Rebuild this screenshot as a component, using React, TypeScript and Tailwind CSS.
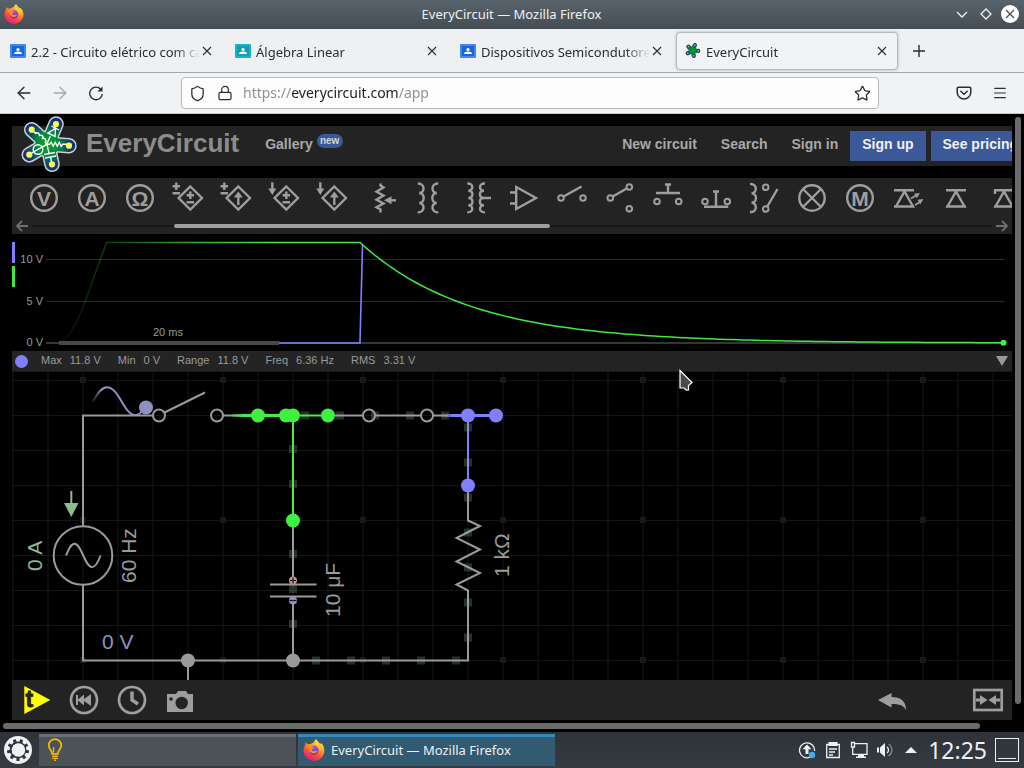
import { ReactNode } from "react";
import { ArrowLeft, ArrowRight, Lock, Menu, Shield, Star } from "lucide-react";

const UI = "font-['Noto_Sans',sans-serif]";
const GREY = "#9e9e9e";

/* ---------- shared drawings ---------- */

function FirefoxLogo({ className }: { className: string }) {
  return (
    <svg viewBox="0 0 24 24" className={className} aria-hidden="true">
      <defs>
        <linearGradient id="ffBody" x1="0.8" y1="0" x2="0.25" y2="1">
          <stop offset="0" stopColor="#fff44f" />
          <stop offset="0.35" stopColor="#ffa726" />
          <stop offset="0.65" stopColor="#ff4f3a" />
          <stop offset="1" stopColor="#e31587" />
        </linearGradient>
        <radialGradient id="ffGlobe" cx="0.6" cy="0.2" r="0.9">
          <stop offset="0" stopColor="#a14bf0" />
          <stop offset="1" stopColor="#4a3bc0" />
        </radialGradient>
      </defs>
      <path
        d="M14.5 0c1 2.200 3.300 3.900 4.600 5.500.5-.2.500-.8.300-1.400 2.600 2 4 5.500 3.900 8.600C23.100 19.100 18.200 23.700 12 23.700S.6 18.900.6 12.700c0-2.200.6-4.600 2-6.400l.3-2.800 2.300 2.100c1-.4 2.200-.3 3.200-.1C9.300 4.500 10.500 4 11.600 4c.4-1.500 1.500-3 2.900-4z"
        fill="url(#ffBody)"
      />
      <circle cx="12" cy="12.400" r="5" fill="url(#ffGlobe)" />
      <path d="M5.200 6.700c2.200-.6 4.200.2 5.300 1.800l2 .2c-.2 1.300-1.800 1.500-2.500 2.400-.4.800.1 1.800 1.100 2.200 1.800.7 3-.9 4.700-.3-.9 2.500-4.300 3.400-6.700 2-2.900-1.700-4.300-5.300-3.900-8.300z" fill="#ff8a1e" />
      <path d="M13 4c3.800 1.300 6.300 4.500 6.200 8.600-.3-1.700-1.200-3-2.600-3.700C17.300 7 14.500 6.300 13 4z" fill="#ffe14d" />
    </svg>
  );
}

function ClassroomIcon({ outer, inner }: { outer: string; inner: string }) {
  return (
    <svg viewBox="0 0 16 14" className="h-3.5 w-4 shrink-0" aria-hidden="true">
      <rect width="16" height="14" rx="1" fill={outer} />
      <rect x="2" y="2" width="12" height="10" fill={inner} />
      <circle cx="8" cy="5.500" r="1.600" fill="#fff" />
      <path d="M4 10c0-1.700 2-2.400 4-2.400s4 .7 4 2.400z" fill="#fff" />
    </svg>
  );
}

const ARMS: [number, number][] = [
  [11.7, 15.7],
  [36, 10],
  [49, 31.7],
  [32, 50.3],
  [9.3, 40.7],
];

function CircuitLogo({ className, detailed = true }: { className: string; detailed?: boolean }) {
  const id = detailed ? "logoLarge" : "logoSmall";
  const star = (grow: number, color: string) => (
    <g stroke={color} strokeLinecap="round" fill={color}>
      <circle cx="27.500" cy="30" r={12 + grow} stroke="none" />
      {ARMS.map(([x, y]) => (
        <path key={x} d={`M27.500 30L${x} ${y}`} strokeWidth={12.500 + grow * 2} />
      ))}
    </g>
  );
  return (
    <svg viewBox="0 2 58 60" className={className} fill="none" aria-hidden="true">
      <defs>
        <radialGradient id={id} gradientUnits="userSpaceOnUse" cx="28" cy="30" r="28">
          <stop offset="0" stopColor="#00a81c" />
          <stop offset="0.4" stopColor="#068a40" />
          <stop offset="0.72" stopColor="#0f4570" />
          <stop offset="1" stopColor="#122a80" />
        </radialGradient>
      </defs>
      {star(1.5, detailed ? "#d0d0d0" : "#34506e")}
      {star(0, `url(#${id})`)}
      {detailed && (
        <g stroke="#fff" strokeWidth="1.400">
          <path d="M26.700 30.300h3l1.500-2 2 4 2-4 2 4 2-4 2 4 1.500-2H48" />
          <path d="M26.700 30.300l-1.500-2.300c2-2-1-5-3-3 2-3-1-5-3-3 1-3-2-4-3.500-2.500L12 16" />
          <path d="M26.700 30.300l3.600-8M34 15l2-5M28 19l7 3.500.5-8zM31.500 12l7.500 4" />
          <circle cx="18" cy="35.500" r="4.800" />
          <path d="M26.700 30.300L10 40" />
          <path d="M27 30.300l2 9M24 40.500l11-2M25 44l11-2M30.500 43l1.500 7" />
        </g>
      )}
      {ARMS.map(([x, y]) => (
        <circle key={x} cx={x} cy={y} r="3.100" fill={detailed ? "#fdfd50" : "#8ae060"} />
      ))}
    </svg>
  );
}

/* ---------- browser chrome ---------- */

function TitleBar() {
  return (
    <header className={`flex h-[29px] items-center bg-linear-to-b from-[#59636b] to-[#454d54] pr-[5px] pb-px pl-1 text-[#eff0f1] ${UI}`}>
      <div className="flex flex-1">
        <FirefoxLogo className="size-5" />
      </div>
      <h1 className="text-[13px] leading-5">EveryCircuit — Mozilla Firefox</h1>
      <div className="flex flex-1 items-center justify-end gap-1.5">
        <button aria-label="Minimize" className="size-[18px]">
          <svg viewBox="0 0 18 18" fill="none" stroke="currentColor" strokeWidth="1.300">
            <path d="M4 7l5 5 5-5" />
          </svg>
        </button>
        <button aria-label="Maximize" className="size-[18px]">
          <svg viewBox="0 0 18 18" fill="none" stroke="currentColor" strokeWidth="1.300">
            <path d="M9 4l5 5-5 5-5-5z" />
          </svg>
        </button>
        <button aria-label="Close" className="size-[18px] rounded-full bg-white text-[#4a525a]">
          <svg viewBox="0 0 18 18" fill="none" stroke="currentColor" strokeWidth="1.400">
            <path d="M5 5l8 8M13 5l-8 8" />
          </svg>
        </button>
      </div>
    </header>
  );
}

const TABS: { title: string; icon: ReactNode; active?: boolean }[] = [
  { title: "2.2 - Circuito elétrico com capacitor", icon: <ClassroomIcon outer="#4285f4" inner="#1967d2" /> },
  { title: "Álgebra Linear", icon: <ClassroomIcon outer="#12b5cb" inner="#129eaf" /> },
  { title: "Dispositivos Semicondutores", icon: <ClassroomIcon outer="#4285f4" inner="#1967d2" /> },
  { title: "EveryCircuit", icon: <CircuitLogo className="size-4 shrink-0" detailed={false} />, active: true },
];

function TabStrip() {
  return (
    <div className={`flex h-11 items-center gap-[3px] border-b border-[#a5a6a9] bg-[#eff0f2] pl-px text-[#2a2c30] ${UI}`}>
      {TABS.map((tab) => (
        <div
          key={tab.title}
          className={`flex h-[38px] w-[222px] items-center rounded border px-2 ${
            tab.active ? "border-[#b5b8c2] bg-[#f2f3f5] shadow-[0_0_3px_#b0b2bb]" : "border-transparent"
          }`}
        >
          {tab.icon}
          <span className="ml-[5px] flex-1 overflow-hidden pt-0.5 text-[13px] leading-5 whitespace-nowrap mask-[linear-gradient(to_right,#000_calc(100%-26px),transparent)]">
            {tab.title}
          </span>
          <button aria-label={`Close ${tab.title}`} className="size-3.5">
            <svg viewBox="0 0 14 14" fill="none" stroke="currentColor" strokeWidth="1.100">
              <path d="M3 3l8 8M11 3l-8 8" />
            </svg>
          </button>
        </div>
      ))}
      <button aria-label="New tab" className="ml-2.5 size-4">
        <svg viewBox="0 0 16 16" fill="none" stroke="currentColor" strokeWidth="1.400">
          <path d="M8 2v12M2 8h12" />
        </svg>
      </button>
    </div>
  );
}

function NavBar() {
  return (
    <nav className={`flex h-[41px] items-center border-b border-[#c8c9cc] bg-[#f1f2f4] px-4 text-[#2a2c30] ${UI}`}>
      <button aria-label="Back" className="flex size-4 items-center justify-center">
        <ArrowLeft size={20} strokeWidth={1.6} className="shrink-0" />
      </button>
      <button aria-label="Forward" className="ml-5 flex size-4 items-center justify-center text-[#a7a8ab]">
        <ArrowRight size={20} strokeWidth={1.6} className="shrink-0" />
      </button>
      <button aria-label="Reload" className="ml-5 size-4">
        <svg viewBox="0 0 16 16" fill="none" stroke="currentColor" strokeWidth="1.400">
          <path d="M12.800 4.300A6.300 6.300 0 1 0 14.300 9" />
          <path d="M14.500 1.500v5H9.500z" fill="currentColor" stroke="none" />
        </svg>
      </button>
      <div className="ml-[77px] flex h-8 flex-1 items-center rounded border border-[#b7b9be] bg-[#fdfdfe] px-[7px]">
        <Shield size={17} strokeWidth={1.8} className="shrink-0" />
        <Lock size={16} strokeWidth={1.8} className="ml-[11px] shrink-0" />
        <input
          type="text"
          aria-label="Address"
          defaultValue="https://everycircuit.com/app"
          className="ml-2.5 min-w-0 flex-1 bg-[linear-gradient(to_right,#8c8d90_48px,#1c1d20_48px,#1c1d20_156px,#8c8d90_156px)] bg-clip-text text-[14px] leading-6 text-transparent outline-none"
        />
        <button aria-label="Bookmark" className="size-[17px]">
          <Star size={17} strokeWidth={1.8} />
        </button>
      </div>
      <button aria-label="Save to Pocket" className="ml-[77px] size-4">
        <svg viewBox="0 0 16 16" fill="none" stroke="currentColor" strokeWidth="1.500" strokeLinecap="round" strokeLinejoin="round">
          <path d="M2.500 2.200h11a1.300 1.300 0 0 1 1.300 1.300v3.700a6.800 6.800 0 0 1-13.600 0V3.500a1.300 1.300 0 0 1 1.300-1.300z" />
          <path d="M4.800 6.300L8 9.300l3.200-3" />
        </svg>
      </button>
      <button aria-label="Menu" className="ml-5 size-4">
        <Menu size={16} strokeWidth={1.8} />
      </button>
    </nav>
  );
}

/* ---------- site header ---------- */

function SiteHeader() {
  const link = "flex h-[30px] shrink-0 items-center px-3 pb-1";
  return (
    <div className="flex h-10 items-center bg-[#232323] pl-2 text-[14px] font-bold text-[#a9a9a9]">
      <CircuitLogo className="h-[60px] w-[58px] shrink-0" />
      <a href="#home" className="ml-2 shrink-0 pb-1.5 text-[26px] leading-8 text-[#8c8c8c]">
        EveryCircuit
      </a>
      <a href="#gallery" className="ml-[26px] shrink-0 pb-1">
        Gallery
      </a>
      <span className="ml-1 flex h-3.5 w-[26px] shrink-0 -translate-y-[5px] items-center justify-center rounded-full bg-[#3b5998] pb-0.5 text-[10px] text-[#d4d4d4]">
        new
      </span>
      <div className="-mr-[18px] ml-auto flex shrink-0">
        <a href="#new" className={link}>New circuit</a>
        <a href="#search" className={link}>Search</a>
        <a href="#signin" className={link}>Sign in</a>
        <a href="#signup" className={`${link} bg-[#3b5998] text-[#f0f0f0]`}>Sign up</a>
        <a href="#pricing" className={`${link} ml-[5px] bg-[#3b5998] text-[#f0f0f0]`}>See pricing</a>
      </div>
    </div>
  );
}

/* ---------- component palette ---------- */

const Meter = ({ letter }: { letter: string }) => (
  <>
    <circle cx="24" cy="20" r="12.800" />
    <text x="24" y="27.500" textAnchor="middle" fontSize="21" fontWeight="bold" fill={GREY} stroke="none">
      {letter}
    </text>
  </>
);

const Diamond = () => <path d="M26.300 8.500L38 20 26.300 31.500 14.600 20z" />;
const PlusMinus = ({ x, y }: { x: number; y: number }) => (
  <path d={`M${x - 3.7} ${y}h7.400M${x} ${y - 3.7}v7.400M${x - 3.7} ${y + 7}h7.400`} />
);
const ArrowDown = () => (
  <>
    <path d="M12.300 4.300v8" />
    <path d="M8.300 10.500h8l-4 6.500z" fill={GREY} stroke="none" />
  </>
);
const InnerUp = () => (
  <>
    <path d="M26.300 27v-8" />
    <path d="M21.800 19.500h9l-4.500-6z" fill={GREY} stroke="none" />
  </>
);

const PALETTE: { name: string; art: ReactNode }[] = [
  { name: "Voltmeter", art: <Meter letter="V" /> },
  { name: "Ammeter", art: <Meter letter="A" /> },
  { name: "Ohmmeter", art: <Meter letter="Ω" /> },
  { name: "Voltage-controlled voltage source", art: <><PlusMinus x={12.3} y={8.3} /><Diamond /><PlusMinus x={26.3} y={17.3} /></> },
  { name: "Voltage-controlled current source", art: <><PlusMinus x={12.3} y={8.3} /><Diamond /><InnerUp /></> },
  { name: "Current-controlled voltage source", art: <><ArrowDown /><Diamond /><PlusMinus x={26.3} y={17.3} /></> },
  { name: "Current-controlled current source", art: <><ArrowDown /><Diamond /><InnerUp /></> },
  {
    name: "Potentiometer",
    art: (
      <>
        <path d="M24.500 5.500v2l3 2-7 4.200 7 3.800-7 4.200 7 3.800-7 3.800 4 2.200v3" />
        <path d="M40 22.300h-6" />
        <path d="M28 22.300l7.500-4v8z" fill={GREY} stroke="none" />
      </>
    ),
  },
  {
    name: "Transformer",
    art: (
      <>
        <path d="M13.700 5.500c7.500-.5 7.500 9.500 1.500 9.500 6 0 6 10 0 10 6 0 6 10-1.500 9.300" />
        <path d="M34.300 5.500c-7.500-.5-7.500 9.500-1.500 9.500-6 0-6 10 0 10-6 0-6 10 1.500 9.300" />
      </>
    ),
  },
  {
    name: "Tapped transformer",
    art: (
      <>
        <path d="M15.300 5.500c6.500-.5 6.500 7.200 1 7.200 5.500 0 5.500 7.300 0 7.300 5.500 0 5.500 7.300 0 7.300 5.500 0 5.500 7.500-1 7" />
        <path d="M33 5.500c-6.500-.5-6.500 7.200-1 7.200-5.500 0-5.500 7.300 0 7.300-5.500 0-5.500 7.300 0 7.300-5.500 0-5.500 7.500 1 7M31 20h8" />
      </>
    ),
  },
  { name: "Op-amp", art: <path d="M16.200 9v22L36 20zM10 14.500h6M10 25.500h6" /> },
  {
    name: "Switch",
    art: (
      <>
        <circle cx="13" cy="20" r="2.800" strokeWidth="2" />
        <circle cx="35" cy="20" r="2.800" strokeWidth="2" />
        <path d="M15.500 18.500l18-10" />
      </>
    ),
  },
  {
    name: "Two-way switch",
    art: (
      <>
        <circle cx="14.300" cy="20" r="2.800" strokeWidth="2" />
        <circle cx="33.300" cy="9" r="2.800" strokeWidth="2" />
        <circle cx="33.300" cy="30.700" r="2.800" strokeWidth="2" />
        <path d="M16.700 18.500l14-8" />
      </>
    ),
  },
  {
    name: "Push button, open",
    art: (
      <>
        <circle cx="13" cy="23.500" r="2.800" strokeWidth="2" />
        <circle cx="34.700" cy="23.500" r="2.800" strokeWidth="2" />
        <path d="M12 15h24M24 6v9M21 6.500h6" />
      </>
    ),
  },
  {
    name: "Push button, closed",
    art: (
      <>
        <circle cx="13" cy="23.500" r="2.800" strokeWidth="2" />
        <circle cx="35.300" cy="23.500" r="2.800" strokeWidth="2" />
        <path d="M12 28.700h24.300M24 13v15M21 13.500h6" />
      </>
    ),
  },
  {
    name: "Relay",
    art: (
      <>
        <path d="M10 6c7.500-.5 7.500 9.300 1.500 9.300 6 0 6 9.400 0 9.400 6 0 6 9.800-1.500 9.300" />
        <circle cx="25.700" cy="9.300" r="2.800" strokeWidth="2" />
        <circle cx="25.700" cy="31" r="2.800" strokeWidth="2" />
        <path d="M27.300 28.500L37.500 11" />
      </>
    ),
  },
  {
    name: "Lamp",
    art: (
      <>
        <circle cx="24" cy="20" r="12.700" />
        <path d="M15 11l18 18M33 11L15 29" />
      </>
    ),
  },
  { name: "Motor", art: <Meter letter="M" /> },
  {
    name: "LED",
    art: (
      <>
        <path d="M10 12.300h20M12 28.500h17l-8.500-15zM10 28.500h20" />
        <path d="M27 20.500l5-3M31 27l5-3" strokeWidth="1.800" />
        <path d="M36 15l-6 .8 2.800 4.500zM39.500 21l-6 .8 2.800 4.500z" fill={GREY} stroke="none" />
      </>
    ),
  },
  { name: "Diode", art: <path d="M14 12.300h20M15.500 28.500h17L24 13.500zM14 28.500h20" /> },
  { name: "Zener diode", art: <path d="M15 16v-3.700h18V9M15.500 28.500h17L24 13.500zM14 28.500h20" /> },
];

function Palette() {
  return (
    <section aria-label="Components" className="mt-3 overflow-hidden bg-[#232323]">
      <div className="flex h-10 pl-2">
        {PALETTE.map((item) => (
          <button key={item.name} aria-label={item.name} className="h-10 w-12 shrink-0">
            <svg viewBox="0 0 48 40" className="h-10 w-12" fill="none" stroke={GREY} strokeWidth="2.400">
              {item.art}
            </svg>
          </button>
        ))}
      </div>
      <div className="flex h-4 items-center gap-1 px-1 text-[#6e6e6e]">
        <svg viewBox="0 0 12 12" className="size-3 shrink-0" fill="none" stroke="currentColor" strokeWidth="1.800">
          <path d="M12 6H1M6 1L1 6l5 5" />
        </svg>
        <div className="flex h-0.5 flex-1 items-center bg-[#191919]">
          <div className="ml-[14.8%] h-1 w-[39.2%] rounded-full bg-[#9e9e9e]" />
        </div>
        <svg viewBox="0 0 12 12" className="size-3 shrink-0" fill="none" stroke="currentColor" strokeWidth="1.800">
          <path d="M0 6h11M6 1l5 5-5 5" />
        </svg>
      </div>
    </section>
  );
}

/* ---------- oscilloscope ---------- */

const DECAY_START = 360;
const DECAY_CONSTANT = 110;
const decayPath = Array.from({ length: 108 }, (_, i) => {
  const x = DECAY_START + i * 6;
  const y = 343 - 100.5 * Math.exp(-(x - DECAY_START) / DECAY_CONSTANT);
  return `L${Math.min(x, 1003)} ${y.toFixed(2)}`;
}).join("");

function Scope() {
  return (
    <svg className="block h-[117px] w-full" fill="none" role="img" aria-label="Voltage over time">
      <defs>
        <linearGradient id="traceFade" gradientUnits="userSpaceOnUse" x1="59" y1="0" x2="270" y2="0">
          <stop offset="0" stopColor="#40e840" stopOpacity="0.030" />
          <stop offset="0.22" stopColor="#40e840" stopOpacity="0.250" />
          <stop offset="0.6" stopColor="#40e840" stopOpacity="0.700" />
          <stop offset="1" stopColor="#40e840" />
        </linearGradient>
      </defs>
      <g transform="translate(-12 -234)">
        <rect x="12" y="242" width="3" height="21" fill="#8080ff" />
        <rect x="12" y="266" width="3" height="21" fill="#40e840" />
        <g fill="#9a9a9a" fontSize="11" textAnchor="end">
          <text x="43" y="263">10 V</text>
          <text x="43" y="305">5 V</text>
          <text x="43" y="346">0 V</text>
        </g>
        <path d="M46 259.500H1004M46 301.500H1004" stroke="#2b2b2b" />
        <path d="M46 343H1004" stroke="#484848" strokeWidth="1.500" />
        <path d="M59 343H279" stroke="#484848" strokeWidth="4" />
        <path d="M279 343H360L362.500 245" stroke="#8080ff" strokeWidth="1.600" />
        <path d="M59 343C72 338 84 306 90 288L106.500 242.500H268" stroke="url(#traceFade)" strokeWidth="1.500" />
        <path d={`M268 242.500H360${decayPath}`} stroke="#40e840" strokeWidth="1.500" />
        <circle cx="1003.500" cy="342.700" r="3" fill="#40f040" />
        <text x="153" y="336" fontSize="11" fill="#9a9a9a">
          20 ms
        </text>
      </g>
    </svg>
  );
}

const STATS = [
  ["Max", "11.8 V"],
  ["Min", "0 V"],
  ["Range", "11.8 V"],
  ["Freq", "6.36 Hz"],
  ["RMS", "3.31 V"],
];

function StatsBar() {
  return (
    <div className="flex h-5 items-center bg-[#242424] pr-1 pl-[3px] text-[11px] leading-4 text-[#9a9a9a]">
      <span className="mr-[13px] size-[13px] rounded-full bg-[#8080ff]" />
      <dl className="flex gap-[17px] pb-0.5">
        {STATS.map(([label, value]) => (
          <div key={label} className="flex gap-2">
            <dt>{label}</dt>
            <dd>{value}</dd>
          </div>
        ))}
      </dl>
      <button aria-label="Collapse" className="ml-auto">
        <svg viewBox="0 0 12 10" className="h-2.5 w-3">
          <path d="M0 0h12L6 10z" fill="#9a9a9a" />
        </svg>
      </button>
    </div>
  );
}

/* ---------- schematic ---------- */

const CHARGES: [number, number][] = [
  [305, 415.5], [340, 415.5], [375, 415.5], [410, 415.5], [445, 415.5],
  [293, 449], [293, 484], [293, 554], [293, 589], [293, 624],
  [468, 427.5], [468, 462.5], [468, 497.5], [468, 532.5], [468, 567.5], [468, 602.5], [468, 637.5],
  [316, 660.5], [351, 660.5], [386, 660.5], [421, 660.5], [456, 660.5],
];

function Schematic() {
  return (
    <div className="relative border-t border-[#1a1a1a]">
      <svg className="block h-[308px] w-full" fill="none" role="img" aria-label="Circuit diagram">
        <defs>
          <pattern id="grid" patternUnits="userSpaceOnUse" x="82" y="380" width="35" height="35">
            <rect width="2" height="35" fill="#0c0c0c" />
            <rect width="35" height="1" fill="#151515" />
          </pattern>
          <pattern id="gridDots" patternUnits="userSpaceOnUse" x="80" y="377" width="140" height="140">
            <rect width="6" height="6" fill="#191919" />
          </pattern>
          <linearGradient id="toGreen" gradientUnits="userSpaceOnUse" x1="230" y1="0" x2="242" y2="0">
            <stop offset="0" stopColor="#40f040" stopOpacity="0" />
            <stop offset="1" stopColor="#40f040" />
          </linearGradient>
          <linearGradient id="toBlue" gradientUnits="userSpaceOnUse" x1="440" y1="0" x2="452" y2="0">
            <stop offset="0" stopColor="#8080ff" stopOpacity="0" />
            <stop offset="1" stopColor="#8080ff" />
          </linearGradient>
          <linearGradient id="waveFade" gradientUnits="userSpaceOnUse" x1="92" y1="0" x2="102" y2="0">
            <stop offset="0" stopColor="#9090c0" stopOpacity="0.100" />
            <stop offset="1" stopColor="#9090c0" />
          </linearGradient>
        </defs>
        <g transform="translate(-12 -372)">
          <rect x="12" y="372" width="100%" height="308" fill="url(#grid)" />
          <rect x="12" y="372" width="100%" height="308" fill="url(#gridDots)" />

          <g stroke="#9a9a9a" strokeWidth="2">
            <path d="M153 415.500H83V526M83 584V660.500H468V590" />
            <circle cx="83" cy="555.500" r="29.300" />
            <path d="M66 555.500c3-7 5-11.700 8.500-11.700 7 0 10.500 23.400 17.500 23.400 3.500 0 6-4.700 8.500-11.700" />
            <path d="M164.500 412.500L205 392.500" />
            <path d="M223 415.500H240M328 415.500H363M375 415.500H421M433 415.500H448" />
            <circle cx="159" cy="415.500" r="6" />
            <circle cx="217" cy="415.500" r="6" />
            <circle cx="369" cy="415.500" r="6" />
            <circle cx="427" cy="415.500" r="6" />
            <path d="M293 520V584M293 597V660M270 584.500H316.500M270 596.500H316.500" />
            <path d="M468 485V520.500L480 526 456.500 538 480 549.500 456.500 561.500 480 573 456.500 584.500 468 590.500" />
            <path d="M188 660V680" />
          </g>

          <g stroke="#40f040" strokeWidth="2">
            <path d="M230 415.500H293V415.400" stroke="url(#toGreen)" strokeWidth="3" />
            <path d="M293 415.500H328M293 415.500V520" />
          </g>
          <g stroke="#8080ff" strokeWidth="2">
            <path d="M440 415.500H496V415.400" stroke="url(#toBlue)" strokeWidth="3" />
            <path d="M468 415.500V485" />
          </g>

          {CHARGES.map(([x, y]) => (
            <rect key={`${x}-${y}`} x={x - 4} y={y - 4} width="8" height="8" fill="#90b090" fillOpacity="0.270" />
          ))}

          <g fill="#40f040">
            <circle cx="258" cy="415.500" r="7" />
            <circle cx="286" cy="415.500" r="7" />
            <circle cx="293" cy="415.500" r="7" />
            <circle cx="328" cy="415.500" r="7" />
            <circle cx="293" cy="520.500" r="7" />
          </g>
          <g fill="#8080ff">
            <circle cx="468" cy="415.500" r="7" />
            <circle cx="496" cy="415.500" r="7" />
            <circle cx="468" cy="485.500" r="7" />
          </g>
          <g fill="#9a9a9a">
            <circle cx="188" cy="660.500" r="7" />
            <circle cx="293" cy="660.500" r="7" />
          </g>

          <path d="M92.500 402C98 392 102 387.200 107 387.200 119 387.200 124 415.200 135.500 415.200 139 415.200 142 412 146 407" stroke="url(#waveFade)" strokeWidth="2" />
          <circle cx="146" cy="407.500" r="7" fill="#9090c0" />

          <circle cx="293" cy="580.500" r="4" fill="#c09090" />
          <path d="M290 580.500h6M293 577.500v6" stroke="#201818" strokeWidth="1.200" />
          <circle cx="293" cy="600.500" r="4" fill="#9090c0" />
          <path d="M289.500 600.500h7" stroke="#181820" strokeWidth="1.200" />

          <path d="M71.300 491V504" stroke="#8fba8f" strokeWidth="2" />
          <path d="M64 503h14.500L71.300 517z" fill="#8fba8f" />

          <g fontSize="21" fill="#9a9a9a">
            <text transform="translate(42 571) rotate(-90)" fill="#8fba8f">0 A</text>
            <text transform="translate(136 583) rotate(-90)">60 Hz</text>
            <text transform="translate(340 617) rotate(-90)">10 μF</text>
            <text transform="translate(509 577) rotate(-90)">1 kΩ</text>
            <text x="102" y="649" fill="#9090c0">0 V</text>
          </g>
        </g>
      </svg>
      <svg viewBox="0 0 14 22" className="absolute -top-[3px] left-[667px] h-[22px] w-3.5" aria-hidden="true">
        <path d="M1 1.500L13 13.500 9.500 16.500V21L7.500 21.200 5 19H1z" fill="#4a4a4a" stroke="#fff" strokeWidth="1.200" />
      </svg>
    </div>
  );
}

/* ---------- simulator controls ---------- */

function Tool({ label, className = "", children }: { label: string; className?: string; children: ReactNode }) {
  return (
    <button aria-label={label} className={`h-10 w-12 shrink-0 ${className}`}>
      <svg viewBox="0 0 48 40" className="h-10 w-12" fill="none" stroke={GREY} strokeWidth="2.700">
        {children}
      </svg>
    </button>
  );
}

function SimulatorBar() {
  return (
    <div className="flex h-10 bg-[#232323]">
      <Tool label="Run transient simulation">
        <path d="M12.300 6v28l26-14z" fill="#ffff00" stroke="none" />
        <text x="13.500" y="27" fontSize="23" fontWeight="bold" fill="#232323" stroke="#232323" strokeWidth="0.800">t</text>
      </Tool>
      <Tool label="Rewind">
        <circle cx="24" cy="20" r="13" />
        <path d="M16 15h2v4.500l6-5v4.500l7-5v12l-7-5v4.500l-6-5V25h-2z" fill={GREY} stroke="none" />
      </Tool>
      <Tool label="Time">
        <circle cx="24" cy="20" r="13" />
        <path d="M24 11.500V20l6 4" strokeWidth="3.400" />
      </Tool>
      <Tool label="Screenshot">
        <path d="M11 14h9l2-3h8l2 3h5v18H11z" fill={GREY} stroke="none" />
        <circle cx="25.700" cy="23" r="6.200" fill="#232323" stroke="none" />
        <circle cx="15" cy="19" r="1.800" fill="#232323" stroke="none" />
      </Tool>
      <Tool label="Undo" className="mr-12 ml-auto">
        <path d="M10 20l13.500-7v4C32 17 38 20.500 38 30c-2-4-5.500-6.200-14.500-6v3.500z" fill={GREY} stroke="none" />
      </Tool>
      <Tool label="Fit to window">
        <rect x="10.300" y="10" width="27.400" height="20" />
        <path d="M12 18.500h4V15l7.500 5-7.500 5v-3.500h-4zM36 18.500h-4V15l-7.500 5 7.500 5v-3.500h4z" fill={GREY} stroke="none" />
      </Tool>
    </div>
  );
}

/* ---------- desktop panel ---------- */

function TrayIcon({ label, children }: { label: string; children: ReactNode }) {
  return (
    <button aria-label={label} className="size-[18px]">
      <svg viewBox="0 0 18 18" fill="none" stroke="#eff0f1" strokeWidth="1.300">
        {children}
      </svg>
    </button>
  );
}

const GEAR_TEETH = [0, 40, 80, 120, 160, 200, 240, 280, 320];

function Taskbar() {
  return (
    <footer className={`flex h-9 items-center bg-linear-to-b from-[#2d3338] to-[#353b40] pr-[5px] pl-1 text-[#eff0f1] ${UI}`}>
      <button aria-label="Application launcher" className="size-7">
        <svg viewBox="0 0 28 28">
          <circle cx="14" cy="14" r="14" fill="#eff0f1" />
          <g fill="#2d3338">
            {GEAR_TEETH.map((angle) => (
              <rect key={angle} x="12.500" y="3" width="3" height="5" rx="0.500" transform={`rotate(${angle + 20} 14 14)`} />
            ))}
          </g>
          <circle cx="14" cy="14" r="7.500" fill="none" stroke="#2d3338" strokeWidth="1.800" />
          <circle cx="14.500" cy="14" r="6.700" fill="#eff0f1" />
        </svg>
      </button>
      <button aria-label="Notes" className="ml-[7px] flex h-8 w-[257px] min-w-0 items-center border-t-3 border-[#6b7174] bg-[#4c5255] pb-1 pl-2">
        <svg viewBox="0 0 16 24" className="h-[23px] w-4" fill="none" stroke="#f5b70a" strokeWidth="1.800">
          <path d="M5 16.500C5 13 1.500 11.500 1.500 7.700a6.500 6.500 0 0 1 13 0c0 3.800-3.500 5.300-3.500 8.800z" />
          <path d="M5 19h6M5 21.300h6M7 23.200h2M6.500 15V9.500" strokeWidth="1.400" />
        </svg>
      </button>
      <button className="ml-0.5 flex h-8 w-[257px] min-w-0 items-center border-t-3 border-[#3389ba] bg-[#325a71] pb-1 pl-[5px] text-[13px]">
        <FirefoxLogo className="mr-1.5 size-[22px] shrink-0" />
        <span className="truncate leading-5">EveryCircuit — Mozilla Firefox</span>
      </button>
      <div className="ml-auto flex shrink-0 items-center gap-2">
        <TrayIcon label="Updates">
          <path d="M12 16.200A7.500 7.500 0 1 1 16.500 10" />
          <path d="M9 3.500l4.500 4.700h-3V13h-3V8.200h-3z" fill="#eff0f1" stroke="none" />
          <circle cx="14" cy="14" r="3.200" fill="#3daee9" stroke="none" />
        </TrayIcon>
        <TrayIcon label="Clipboard">
          <path d="M2.700 3.500h12.600v13H2.700z" />
          <path d="M4.500 1h9v4h-9z" fill="#eff0f1" stroke="none" />
          <path d="M5 8h8M5 11h6M5 14h4" />
        </TrayIcon>
        <TrayIcon label="Network">
          <path d="M5 2.700h12v10.600H5M2.700 6v7.300H6M1.500 1.500h3v4.500h-3z" />
          <path d="M8 13h6v2.500h2V17H6v-1.500h2z" fill="#eff0f1" stroke="none" />
        </TrayIcon>
        <TrayIcon label="Volume">
          <path d="M1 6.500h2v5H1zM4 6.500L9 2v14l-5-4.500z" fill="#eff0f1" stroke="none" />
          <path d="M11 6c2 1.500 2 4.500 0 6" />
          <path d="M12.500 3c4.500 3 4.500 9 0 12" stroke="#80868a" />
        </TrayIcon>
        <TrayIcon label="Show hidden icons">
          <path d="M3 12l6-6 6 6z" fill="#eff0f1" stroke="none" />
        </TrayIcon>
        <time className="text-[23px] leading-8">12:25</time>
        <button aria-label="Show desktop" className="flex size-6 items-end border border-[#eff0f1] px-0.5 pb-0.5">
          <span className="h-px w-full bg-[#eff0f1]" />
        </button>
      </div>
    </footer>
  );
}

export default function App() {
  return (
    <div className="flex min-h-screen flex-col overflow-hidden bg-black">
      <TitleBar />
      <TabStrip />
      <NavBar />
      <main className="flex flex-1 flex-col font-['Liberation_Sans',Arial,sans-serif]">
        <div className="flex">
          <div className="min-w-0 flex-1 overflow-hidden pt-3 pl-3">
            <SiteHeader />
            <Palette />
            <Scope />
            <StatsBar />
            <Schematic />
            <SimulatorBar />
          </div>
          <div className="flex w-3 shrink-0 justify-center pt-[3px] pb-4">
            <div className="w-1.5 rounded-full bg-[#6b6b6b]" />
          </div>
        </div>
        <div className="flex h-3 items-center pr-11 pl-[3px]">
          <div className="h-1.5 flex-1 rounded-full bg-[#6b6b6b]" />
        </div>
      </main>
      <Taskbar />
    </div>
  );
}
